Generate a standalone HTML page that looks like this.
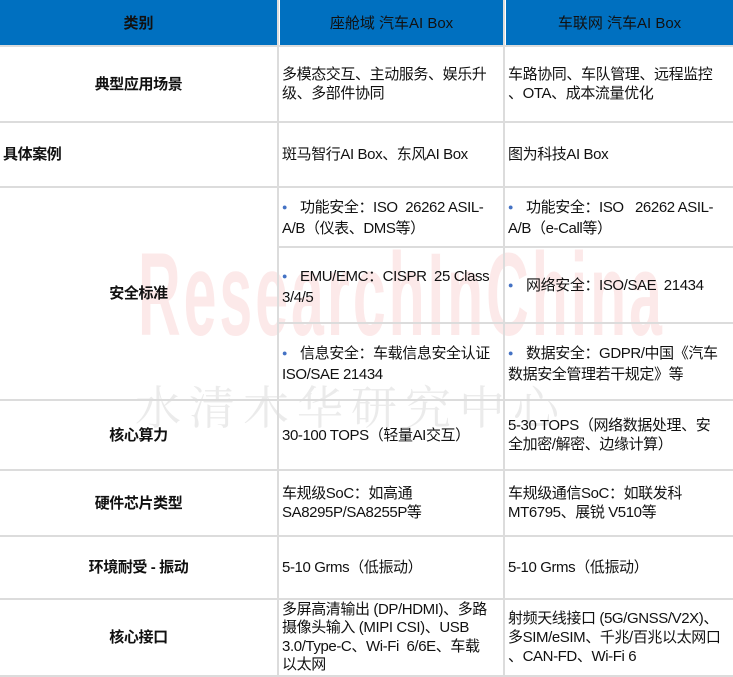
<!DOCTYPE html>
<html><head><meta charset="utf-8"><style>
body{margin:0;width:733px;height:677px;background:#fff;position:relative;overflow:hidden;font-family:"Liberation Sans","Noto Sans CJK SC",sans-serif;font-size:15px;color:#111}
.h{position:absolute;background:#0070c0;color:#111;display:flex;align-items:center;justify-content:center;font-size:15px}
.c{position:absolute;display:flex;align-items:center;white-space:nowrap;line-height:19px;letter-spacing:-0.4px}
.l{justify-content:center;font-weight:bold}
.vl{position:absolute;background:#dcdcdc;width:2px;top:0;height:677px}
.hl{position:absolute;background:#dcdcdc;height:2px;left:0;width:733px}
.hs{position:absolute;background:#dcdcdc;height:2px}
.b{color:#4472c4;font-size:9px;margin-right:13px;position:relative;top:-2px}
.wm{position:absolute;left:138px;top:236px;font-size:118px;font-family:"Liberation Sans",sans-serif;color:rgba(230,70,70,0.12);transform:scaleX(0.5);transform-origin:0 0;letter-spacing:6px;line-height:1;font-weight:bold}
.wm2{position:absolute;left:135px;top:372px;font-size:46px;color:rgba(120,120,120,0.15);letter-spacing:8px;font-family:"Noto Serif CJK SC",serif;white-space:nowrap}
</style></head><body>
<div class="h" style="left:0;top:0;width:277px;height:45px;font-weight:bold">类别</div>
<div class="h" style="left:280px;top:0;width:223px;height:45px">座舱域 汽车AI Box</div>
<div class="h" style="left:506px;top:0;width:227px;height:45px">车联网 汽车AI Box</div>
<div class="wm">ResearchInChina</div>
<div class="wm2">水清木华研究中心</div>
<div class="vl" style="left:277px"></div>
<div class="vl" style="left:503px"></div>
<div class="hl" style="top:45px"></div>
<div class="hl" style="top:121px"></div>
<div class="hl" style="top:186px"></div>
<div class="hs" style="top:246px;left:279px;width:454px"></div>
<div class="hs" style="top:322px;left:279px;width:454px"></div>
<div class="hl" style="top:399px"></div>
<div class="hl" style="top:469px"></div>
<div class="hl" style="top:535px"></div>
<div class="hl" style="top:598px"></div>
<div class="hl" style="top:675px"></div>

<div class="c l" style="left:0;top:47px;width:277px;height:74px">典型应用场景</div>
<div class="c" style="left:282px;top:47px;height:74px">多模态交互、主动服务、娱乐升<br>级、多部件协同</div>
<div class="c" style="left:508px;top:47px;height:74px">车路协同、车队管理、远程监控<br>、OTA、成本流量优化</div>

<div class="c" style="left:3px;top:123px;height:63px;font-weight:bold">具体案例</div>
<div class="c" style="left:282px;top:123px;height:63px">斑马智行AI Box、东风AI Box</div>
<div class="c" style="left:508px;top:123px;height:63px">图为科技AI Box</div>

<div class="c l" style="left:0;top:188px;width:277px;height:211px">安全标准</div>
<div class="c" style="left:282px;top:198px;height:40px;display:block"><span class="b">●</span>功能安全：ISO &nbsp;26262 ASIL-<br>A/B（仪表、DMS等）</div>
<div class="c" style="left:508px;top:198px;height:40px;display:block"><span class="b">●</span>功能安全：ISO &nbsp;&nbsp;26262 ASIL-<br>A/B（e-Call等）</div>
<div class="c" style="left:282px;top:267px;height:40px;display:block"><span class="b">●</span>EMU/EMC：CISPR &nbsp;25 Class<br>3/4/5</div>
<div class="c" style="left:508px;top:276px;height:20px;display:block"><span class="b">●</span>网络安全：ISO/SAE &nbsp;21434</div>
<div class="c" style="left:282px;top:344px;height:40px;display:block"><span class="b">●</span>信息安全：车载信息安全认证<br>ISO/SAE 21434</div>
<div class="c" style="left:508px;top:344px;height:40px;display:block"><span class="b">●</span>数据安全：GDPR/中国《汽车<br>数据安全管理若干规定》等</div>

<div class="c l" style="left:0;top:401px;width:277px;height:68px">核心算力</div>
<div class="c" style="left:282px;top:401px;height:68px">30-100 TOPS（轻量AI交互）</div>
<div class="c" style="left:508px;top:401px;height:68px">5-30 TOPS（网络数据处理、安<br>全加密/解密、边缘计算）</div>

<div class="c l" style="left:0;top:471px;width:277px;height:64px">硬件芯片类型</div>
<div class="c" style="left:282px;top:471px;height:64px">车规级SoC：如高通<br>SA8295P/SA8255P等</div>
<div class="c" style="left:508px;top:471px;height:64px">车规级通信SoC：如联发科<br>MT6795、展锐 V510等</div>

<div class="c l" style="left:0;top:537px;width:277px;height:61px">环境耐受 - 振动</div>
<div class="c" style="left:282px;top:537px;height:61px">5-10 Grms（低振动）</div>
<div class="c" style="left:508px;top:537px;height:61px">5-10 Grms（低振动）</div>

<div class="c l" style="left:0;top:600px;width:277px;height:75px">核心接口</div>
<div class="c" style="left:282px;top:600px;height:75px;line-height:18.5px">多屏高清输出 (DP/HDMI)、多路<br>摄像头输入 (MIPI CSI)、USB<br>3.0/Type-C、Wi-Fi &nbsp;6/6E、车载<br>以太网</div>
<div class="c" style="left:508px;top:600px;height:75px">射频天线接口 (5G/GNSS/V2X)、<br>多SIM/eSIM、千兆/百兆以太网口<br>、CAN-FD、Wi-Fi 6</div>
</body></html>
